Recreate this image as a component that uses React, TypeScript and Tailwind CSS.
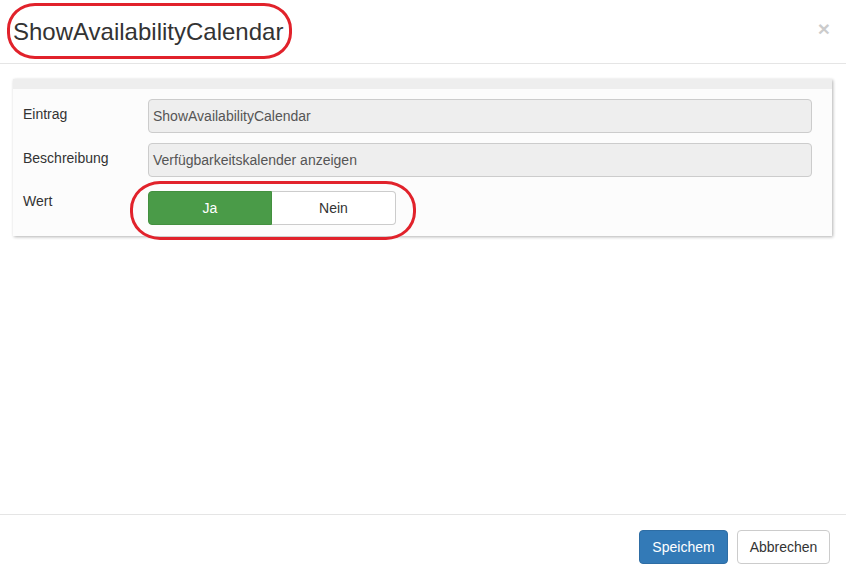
import React from "react";

export default function App() {
  const font = { fontFamily: '"Liberation Sans", Arial, sans-serif' };
  return (
    <div className="relative w-[846px] h-[577px] bg-white flex flex-col text-[#333]" style={font}>
      {/* Header */}
      <div className="h-[64px] border-b border-[#e5e5e5] flex items-start justify-between pl-[13px] pr-[16px] pt-[16px]">
        <h4 className="text-[24px] leading-[32px] text-[#333]">ShowAvailabilityCalendar</h4>
        <span className="text-[21px] font-bold leading-none text-black opacity-20 mt-[2px]">×</span>
      </div>

      {/* Body */}
      <div className="flex-1 pt-[15px] pl-[13px] pr-[14px]">
        <div className="bg-[#fcfcfc] shadow-[1px_1px_3px_rgba(0,0,0,0.3)]">
          <div className="h-[10px] bg-[#eeeeee]" />
          <div className="pt-[10px] pb-[11px] pl-[10px] pr-[20px] flex flex-col gap-[10px] text-[14px]">
            <div className="flex">
              <div className="w-[125px] pt-[5px] text-[#333]">Eintrag</div>
              <div className="flex-1 h-[34px] rounded-[4px] border border-[#ccc] bg-[#eeeeee] px-[4px] flex items-center text-[#555]">
                ShowAvailabilityCalendar
              </div>
            </div>
            <div className="flex">
              <div className="w-[125px] pt-[5px] text-[#333]">Beschreibung</div>
              <div className="flex-1 h-[34px] rounded-[4px] border border-[#ccc] bg-[#eeeeee] px-[4px] flex items-center text-[#555]">
                Verfügbarkeitskalender anzeigen
              </div>
            </div>
            <div className="flex mt-[4px]">
              <div className="w-[125px] text-[#333]">Wert</div>
              <div className="flex h-[34px]">
                <div className="w-[124px] bg-[#4a9b48] border border-[#43903f] rounded-l-[4px] text-white flex items-center justify-center">
                  Ja
                </div>
                <div className="w-[124px] bg-white border border-[#ccc] border-l-0 rounded-r-[4px] text-[#333] flex items-center justify-center">
                  Nein
                </div>
              </div>
            </div>
          </div>
        </div>
      </div>

      {/* Footer */}
      <div className="h-[63px] border-t border-[#e5e5e5] flex items-start justify-end gap-[9px] pt-[15px] pr-[16px]">
        <button className="h-[34px] w-[89px] rounded-[4px] bg-[#337ab7] border border-[#2e6da4] text-white text-[14px]">
          Speichem
        </button>
        <button className="h-[34px] w-[93px] rounded-[4px] bg-white border border-[#ccc] text-[#333] text-[14px]">
          Abbrechen
        </button>
      </div>

      {/* Annotations */}
      <div className="absolute left-[7px] top-[3px] w-[285px] h-[56px] border-[3px] border-[#e1222b] rounded-[28px/26px] pointer-events-none" />
      <div className="absolute left-[130px] top-[181px] w-[286px] h-[59px] border-[3px] border-[#e1222b] rounded-[30px/28px] pointer-events-none" />
    </div>
  );
}
